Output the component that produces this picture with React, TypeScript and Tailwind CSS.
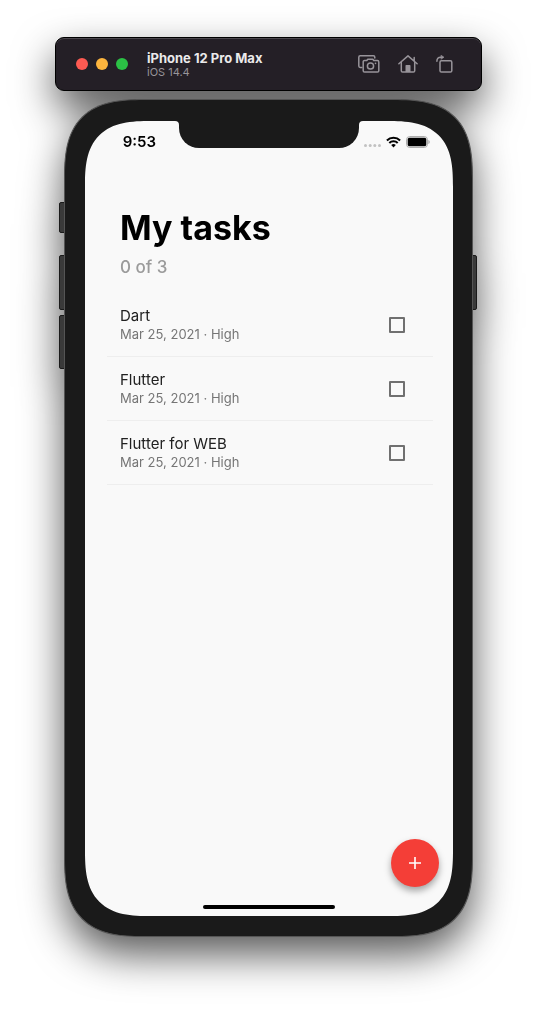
import { useState } from "react";

type Task = { id: string; title: string; date: string; priority: string; done: boolean };

const initialTasks: Task[] = [
  { id: "dart", title: "Dart", date: "Mar 25, 2021", priority: "High", done: false },
  { id: "flutter", title: "Flutter", date: "Mar 25, 2021", priority: "High", done: false },
  { id: "flutter-web", title: "Flutter for WEB", date: "Mar 25, 2021", priority: "High", done: false },
];

function ScreenshotIcon() {
  return (
    <svg width="22" height="18" viewBox="0 0 22 18" fill="none" stroke="currentColor" strokeWidth="1.5" strokeLinecap="round" strokeLinejoin="round">
      <path d="M3.800 12.500H2.200A1.400 1.400 0 0 1 .8 11.100V2.200A1.400 1.400 0 0 1 2.200.8h13.200a1.400 1.400 0 0 1 1.400 1.400V3" />
      <path d="M6.500 5.500h2.300l1-1.300h5l1 1.300h3.600a1.400 1.400 0 0 1 1.400 1.400v8.900a1.300 1.300 0 0 1-1.300 1.300H6.500a1.300 1.300 0 0 1-1.300-1.300V6.800a1.300 1.300 0 0 1 1.300-1.300Z" />
      <circle cx="12.500" cy="11" r="3.100" />
      <circle cx="17.500" cy="8.400" r=".8" fill="currentColor" stroke="none" />
    </svg>
  );
}

function HomeIcon() {
  return (
    <svg width="20" height="18" viewBox="0 0 20 18" fill="none" stroke="currentColor" strokeWidth="1.5" strokeLinecap="round" strokeLinejoin="round">
      <path d="M.9 8.800 10 .9l9.100 7.900M16.200 6V2.500" />
      <path d="M3.300 7.600v8.200c0 .8.500 1.300 1.300 1.300h10.800c.8 0 1.300-.5 1.300-1.300V7.600" />
      <path d="M7.500 17v-6.300c0-.4.300-.7.700-.7h3.600c.4 0 .7.300.7.700V17Z" fill="currentColor" stroke="none" />
    </svg>
  );
}

function RotateIcon() {
  return (
    <svg width="17" height="18" viewBox="0 0 17 18" fill="none" stroke="currentColor" strokeWidth="1.5" strokeLinecap="round" strokeLinejoin="round">
      <rect x="4" y="5.800" width="11.800" height="11.300" rx="1.400" />
      <path d="M.9 6.200C.9 3.600 2.300 2.200 4.800 2.200H6" />
      <path d="M5.300.4 8 2.200 5.300 4.100Z" fill="currentColor" strokeWidth=".6" />
    </svg>
  );
}

function SignalDots() {
  return (
    <svg width="17" height="14" viewBox="0 0 17 14" fill="#c2c2c2">
      <circle cx="1.500" cy="10.500" r="1.500" />
      <circle cx="6.200" cy="10.500" r="1.500" />
      <circle cx="10.800" cy="10.500" r="1.500" />
      <circle cx="15.500" cy="10.500" r="1.500" />
    </svg>
  );
}

function WifiIcon() {
  return (
    <svg width="15" height="12" viewBox="0 0 15 12" fill="none" stroke="#000" strokeWidth="2">
      <path d="M.9 4.500a9.300 9.300 0 0 1 13.200 0" />
      <path d="M3.300 7a5.900 5.900 0 0 1 8.400 0" />
      <path d="M7.500 11.400 5.200 9.100a3.300 3.300 0 0 1 4.600 0Z" fill="#000" stroke="none" />
    </svg>
  );
}

function BatteryIcon() {
  return (
    <svg width="24" height="12" viewBox="0 0 24 12">
      <rect x=".6" y=".6" width="20.800" height="10.800" rx="3" fill="none" stroke="#a6a6a6" />
      <rect x="1.700" y="1.800" width="18.600" height="8.400" rx="1.600" fill="#000" />
      <path d="M22.400 4v4c.8-.3 1.300-1.100 1.300-2s-.5-1.700-1.300-2Z" fill="#a6a6a6" />
    </svg>
  );
}

function WindowBar() {
  return (
    <header className="flex h-[54px] items-center rounded-[9px] border border-black bg-[#241f26] pr-7 pl-5 shadow-[inset_0_1px_0_#4b474d]">
      <div className="flex gap-2">
        <button aria-label="Close" className="size-3 rounded-full bg-[#fe5a52]" />
        <button aria-label="Minimize" className="size-3 rounded-full bg-[#feb53e]" />
        <button aria-label="Zoom" className="size-3 rounded-full bg-[#2bc145]" />
      </div>
      <div className="ml-[19px] flex-1">
        <h1 className="text-[13px] leading-4 font-bold text-[#ebeaeb]">iPhone 12 Pro Max</h1>
        <p className="text-[11px] leading-[13px] text-[#98959a]">iOS 14.4</p>
      </div>
      <div className="flex gap-[18px] text-[#98949a]">
        <button aria-label="Screenshot"><ScreenshotIcon /></button>
        <button aria-label="Home"><HomeIcon /></button>
        <button aria-label="Rotate"><RotateIcon /></button>
      </div>
    </header>
  );
}

function StatusBar() {
  return (
    <div className="grid h-[42px] grid-cols-[1fr_180px_1fr] items-center">
      <span className="justify-self-end pr-[23px] text-[15px] leading-5 font-semibold text-black">9:53</span>
      <div className="relative h-[27px] self-start rounded-b-[20px] bg-[#1a1a1a]">
        <svg className="absolute top-0 -left-1" width="4" height="4" viewBox="0 0 4 4" fill="#1a1a1a"><path d="M0 0h4v4A4 4 0 0 0 0 0Z" /></svg>
        <svg className="absolute top-0 -right-1" width="4" height="4" viewBox="0 0 4 4" fill="#1a1a1a"><path d="M4 0H0v4A4 4 0 0 1 4 0Z" /></svg>
      </div>
      <div className="flex items-center gap-[5px] justify-self-end pr-[23px]">
        <SignalDots />
        <WifiIcon />
        <BatteryIcon />
      </div>
    </div>
  );
}

function TaskRow({ task, onToggle }: { task: Task; onToggle: () => void }) {
  return (
    <li className="border-b border-[#eeeeee]">
      <label className="flex h-[63px] items-center justify-between pr-7 pl-[13px]">
        <span>
          <span className="block text-[15px] leading-[18px] text-[#212121]">{task.title}</span>
          <span className="block text-[13px] leading-[18px] text-[#757575]">{task.date} · {task.priority}</span>
        </span>
        <input
          type="checkbox"
          checked={task.done}
          onChange={onToggle}
          className="size-4 appearance-none rounded-[1px] border-2 border-[#707070] checked:border-[#f43e37] checked:bg-[#f43e37]"
        />
      </label>
    </li>
  );
}

export default function App() {
  const [tasks, setTasks] = useState(initialTasks);
  const toggle = (id: string) =>
    setTasks((list) => list.map((t) => (t.id === id ? { ...t, done: !t.done } : t)));
  const doneCount = tasks.filter((t) => t.done).length;

  return (
    <div className="flex min-h-screen justify-center bg-white px-[55px] pt-[37px] pb-[74px] font-['Inter','Liberation_Sans',sans-serif]">
      <div className="w-full max-w-[427px] drop-shadow-[0_18px_20px_rgba(0,0,0,0.65)]">
        <WindowBar />
        <div className="relative mx-[9px] mt-2">
          <span className="absolute top-[103px] -left-[5px] h-[31px] w-2 rounded-[2px] border border-[#1a1a1a] bg-[#3a3a3a]" />
          <span className="absolute top-[156px] -left-[5px] h-[55px] w-2 rounded-[2px] border border-[#1a1a1a] bg-[#3a3a3a]" />
          <span className="absolute top-[216px] -left-[5px] h-[54px] w-2 rounded-[2px] border border-[#1a1a1a] bg-[#3a3a3a]" />
          <span className="absolute top-[156px] -right-1 h-[55px] w-2 rounded-[2px] border border-[#1a1a1a] bg-[#3a3a3a]" />
          <div className="relative rounded-[62px] border border-[#555555] bg-[#1a1a1a] pt-[21px] pr-[19px] pb-5 pl-5 supports-[corner-shape:squircle]:rounded-[82px] supports-[corner-shape:squircle]:[corner-shape:superellipse(1.5)]">
            <main className="relative flex aspect-[368/795] flex-col overflow-hidden rounded-[50px] bg-[#f9f9f9] supports-[corner-shape:squircle]:rounded-[66px] supports-[corner-shape:squircle]:[corner-shape:superellipse(1.5)]">
              <StatusBar />
              <div className="px-[35px] pt-[43px]">
                <h2 className="text-[34px] leading-[44px] font-bold text-black">My tasks</h2>
                <p className="mt-[7px] text-[17px] leading-5 font-medium text-[#9b9b9b]">{doneCount} of {tasks.length}</p>
              </div>
              <ul className="mt-4 mr-5 ml-[22px]">
                {tasks.map((task) => (
                  <TaskRow key={task.id} task={task} onToggle={() => toggle(task.id)} />
                ))}
              </ul>
              <button
                aria-label="Add task"
                className="mt-auto mr-[14px] mb-[18px] flex size-12 items-center justify-center self-end rounded-full bg-[#f43e37] shadow-[0_4px_7px_rgba(0,0,0,0.35)]"
              >
                <svg width="12" height="12" viewBox="0 0 12 12" stroke="#fff" strokeWidth="1.600">
                  <path d="M6 0v12M0 6h12" />
                </svg>
              </button>
              <div className="mb-[7px] h-1 w-[132px] self-center rounded-full bg-black" />
            </main>
          </div>
        </div>
      </div>
    </div>
  );
}
